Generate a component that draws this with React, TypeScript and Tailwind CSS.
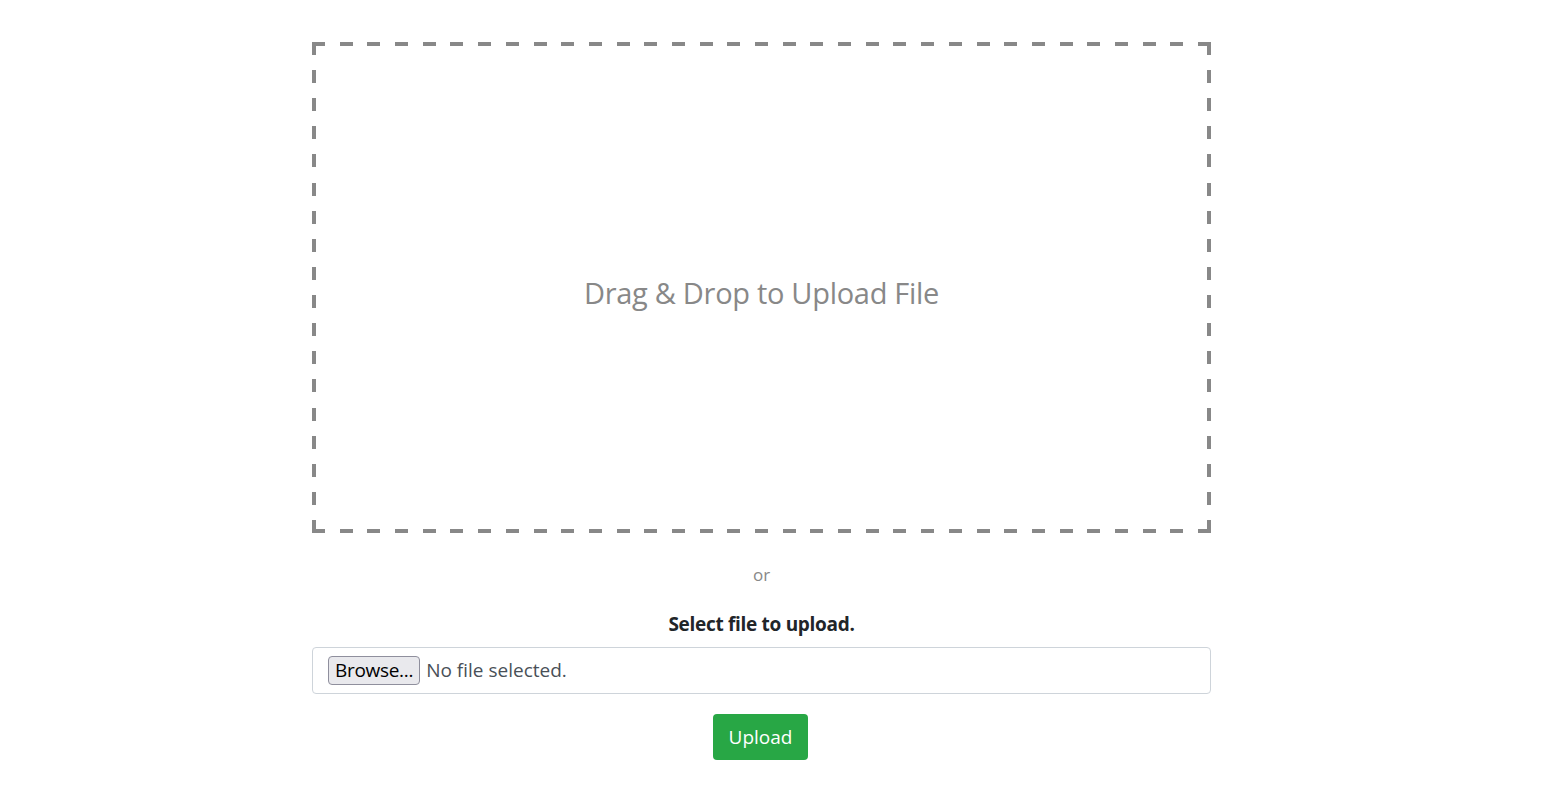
const BOX_W = 899;
const BOX_H = 491;

// dashed border drawn with svg so that every side starts and ends on a dash (corner "L" shapes)
function DashedFrame() {
  const dash = 13;
  const hGap = (BOX_W - dash * 33) / 32;
  const vGap = (BOX_H - dash * 18) / 17;
  return (
    <svg className="pointer-events-none absolute inset-0" width={BOX_W} height={BOX_H} shapeRendering="crispEdges">
      <g stroke="#888888" strokeWidth={4} fill="none">
        <line x1={0} y1={2} x2={BOX_W} y2={2} strokeDasharray={`${dash} ${hGap}`} />
        <line x1={0} y1={BOX_H - 2} x2={BOX_W} y2={BOX_H - 2} strokeDasharray={`${dash} ${hGap}`} />
        <line x1={2} y1={0} x2={2} y2={BOX_H} strokeDasharray={`${dash} ${vGap}`} />
        <line x1={BOX_W - 2} y1={0} x2={BOX_W - 2} y2={BOX_H} strokeDasharray={`${dash} ${vGap}`} />
      </g>
    </svg>
  );
}

export default function App() {
  return (
    <div className="min-h-[800px] w-full bg-white" style={{ fontFamily: '"Open Sans", "Noto Sans", sans-serif' }}>
      <div className="ml-[312px] w-[899px] pt-[42px]">
        {/* Drop zone */}
        <div className="relative flex h-[491px] items-center justify-center pt-[10px]">
          <DashedFrame />
          <span className="text-[29px] text-[#888888] tracking-[-0.3px]">Drag &amp; Drop to Upload File</span>
        </div>

        <div className="mt-[31px] text-center text-[17px] leading-[22px] text-[#888888]">or</div>

        <div className="mt-[26px] text-center text-[19px] font-bold leading-[24px] text-[#212529] tracking-[-0.3px]">
          Select file to upload.
        </div>

        {/* File input */}
        <div className="mt-[11px] flex h-[47px] items-center rounded border border-[#ced4da] px-[15px]">
          <button className="h-[29px] rounded border border-[#8f8f9d] bg-[#e9e9ed] px-[6px] text-[19px] leading-none text-black tracking-[-0.3px]">
            Browse...
          </button>
          <span className="ml-[6px] text-[19px] text-[#495057]">No file selected.</span>
        </div>

        <div className="mt-[20px] flex justify-center">
          <button className="-ml-[2px] h-[46px] w-[95px] rounded bg-[#28a745] text-[19px] text-white">Upload</button>
        </div>
      </div>
    </div>
  );
}
